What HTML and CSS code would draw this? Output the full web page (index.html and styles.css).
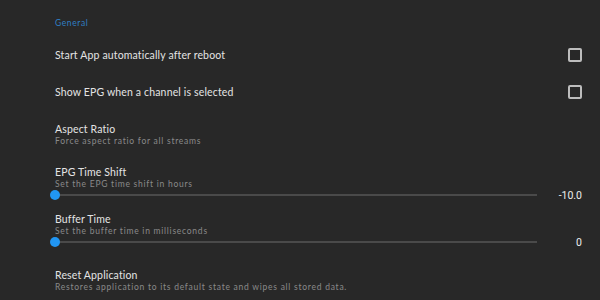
FILE: index.html
```html
<!DOCTYPE html>
<html>
<head>
<meta charset="utf-8">
<link rel="stylesheet" href="styles.css">
</head>
<body>
<div class="page">
  <div class="header">General</div>

  <div class="check-row first">
    <div class="title">Start App automatically after reboot</div>
    <div class="checkbox"></div>
  </div>
  <div class="check-row second">
    <div class="title">Show EPG when a channel is selected</div>
    <div class="checkbox"></div>
  </div>

  <div class="item aspect">
    <div class="title">Aspect Ratio</div>
    <div class="sub">Force aspect ratio for all streams</div>
  </div>

  <div class="item epg">
    <div class="title">EPG Time Shift</div>
    <div class="sub">Set the EPG time shift in hours</div>
    <div class="slider">
      <div class="track"><div class="thumb"></div></div>
      <div class="value">-10.0</div>
    </div>
  </div>

  <div class="item buffer">
    <div class="title">Buffer Time</div>
    <div class="sub">Set the buffer time in milliseconds</div>
    <div class="slider">
      <div class="track"><div class="thumb"></div></div>
      <div class="value">0</div>
    </div>
  </div>

  <div class="item reset">
    <div class="title">Reset Application</div>
    <div class="sub">Restores application to its default state and wipes all stored data.</div>
  </div>
</div>
</body>
</html>
```

FILE: styles.css
```css
html, body {
  margin: 0;
  padding: 0;
  background: #282828;
  height: 100%;
  overflow: hidden;
}
.page {
  padding: 17px 18px 0 55px;
  font-family: Lato, "Noto Sans", sans-serif;
}
.header {
  font-size: 8.5px;
  line-height: 12px;
  height: 12px;
  color: #2f7fc4;
  letter-spacing: 0.6px;
}
.title {
  font-size: 10.5px;
  line-height: 14px;
  height: 14px;
  color: #e4e4e4;
  letter-spacing: 0.15px;
}
.sub {
  font-size: 8.5px;
  line-height: 10px;
  height: 10px;
  color: #8a8a8a;
  letter-spacing: 0.75px;
  white-space: nowrap;
}
.check-row {
  display: flex;
  justify-content: space-between;
  align-items: center;
  height: 14px;
}
.check-row.first { margin-top: 19px; }
.check-row.second { margin-top: 23px; }
.checkbox {
  width: 10px;
  height: 10px;
  border: 2px solid #bdbdbd;
  border-radius: 2px;
}
.item.aspect { margin-top: 23px; }
.item.epg { margin-top: 19px; }
.item.buffer { margin-top: 11px; }
.item.reset { margin-top: 20px; }
.slider {
  display: flex;
  align-items: center;
  height: 12px;
}
.track {
  position: relative;
  flex: 1;
  height: 2px;
  background: #4a4a4a;
}
.thumb {
  position: absolute;
  left: -5px;
  top: -4px;
  width: 10px;
  height: 10px;
  border-radius: 50%;
  background: #2196f3;
}
.value {
  width: 45px;
  text-align: right;
  font-family: Roboto, sans-serif;
  font-size: 10.5px;
  color: #eeeeee;
}
```
